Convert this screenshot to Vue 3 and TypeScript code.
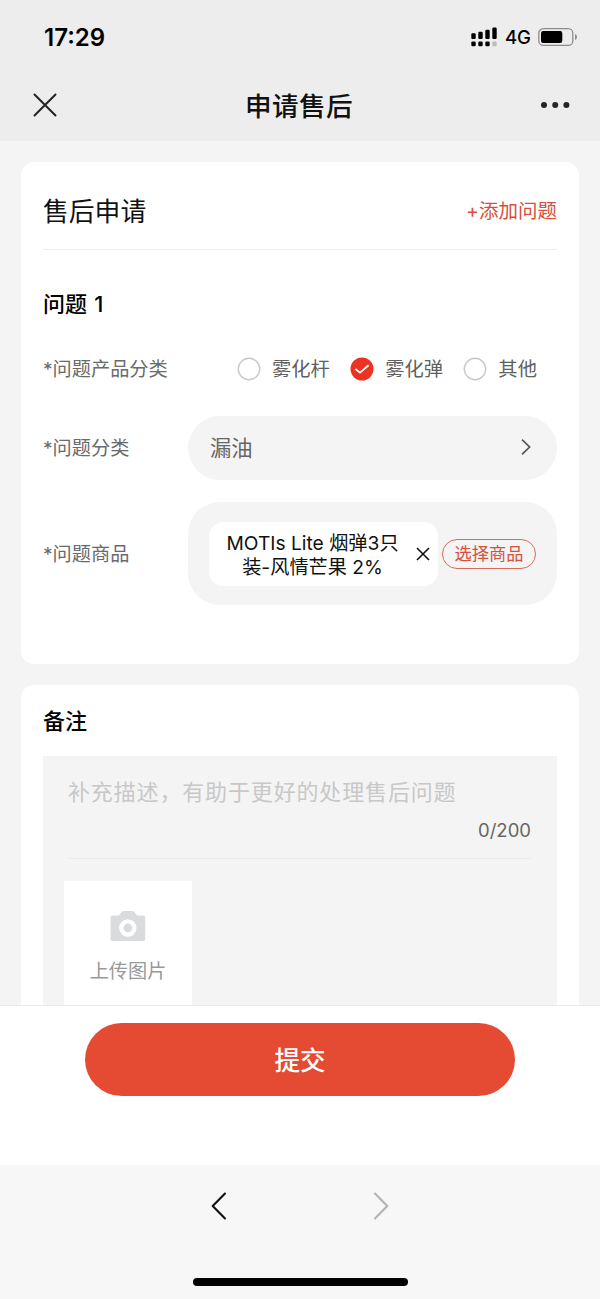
<script setup lang="ts">
import { ref } from 'vue'

const categories = ['雾化杆', '雾化弹', '其他']
const selected = ref('雾化弹')
const note = ref('')
const signalBars = [
  { x: 0, y: 6.3 },
  { x: 7, y: 4.8 },
  { x: 14, y: 2.8 },
  { x: 21, y: 0.6 },
]
</script>

<template>
  <div class="screen">
    <header class="top">
      <div class="status">
        <span class="time">17:29</span>
        <div class="status-right">
          <svg class="signal" width="26" height="20" viewBox="0 0 26 20">
            <rect v-for="b in signalBars" :key="b.x" :x="b.x + 0.3" :y="b.y" width="4.4" :height="12 - b.y" rx="1.2" />
            <rect v-for="b in signalBars" :key="'d' + b.x" :x="b.x + 0.3" y="14.6" width="4.4" height="4.6" rx="1.2" :opacity="b.x === 21 ? 0.2 : 1" />
          </svg>
          <span class="network">4G</span>
          <svg class="battery" width="40" height="20" viewBox="0 0 40 20">
            <rect x="0.8" y="1.6" width="34" height="16.8" rx="4.5" fill="none" stroke="#8d8d8d" stroke-width="1.3" />
            <rect x="3" y="4" width="21.3" height="12" rx="2.2" />
            <path d="M37 7q2 .7 2 3t-2 3z" fill="#8d8d8d" />
          </svg>
        </div>
      </div>
      <nav class="nav">
        <svg width="24" height="24" viewBox="0 0 24 24" fill="none" stroke="#222" stroke-width="2" stroke-linecap="round">
          <path d="M1.5 1.5l21 21M22.5 1.5l-21 21" />
        </svg>
        <h1>申请售后</h1>
        <svg width="30" height="8" viewBox="0 0 30 8" fill="#252525">
          <circle cx="4" cy="4" r="3" /><circle cx="15.2" cy="4" r="3" /><circle cx="26.4" cy="4" r="3" />
        </svg>
      </nav>
    </header>

    <main class="content">
      <section class="card request">
        <div class="card-head">
          <h2>售后申请</h2>
          <a class="add">+添加问题</a>
        </div>
        <h3 class="issue">问题 1</h3>
        <div class="row kinds">
          <span class="label">*问题产品分类</span>
          <div class="radios">
            <label v-for="c in categories" :key="c" class="radio" @click="selected = c">
              <svg width="24" height="24" viewBox="0 0 24 24" fill="none">
                <template v-if="selected === c">
                  <circle cx="12" cy="12" r="11.5" fill="#e93323" />
                  <path d="M5.4 12l4.6 3.6L18.6 8.2" stroke="#fff" stroke-width="1.8" />
                </template>
                <circle v-else cx="12" cy="12" r="10.7" fill="#fff" stroke="#c8c8c8" stroke-width="1.4" />
              </svg>
              <span>{{ c }}</span>
            </label>
          </div>
        </div>
        <div class="row select-row">
          <span class="label">*问题分类</span>
          <div class="select">
            <span>漏油</span>
            <svg width="10" height="18" viewBox="0 0 10 18" fill="none" stroke="#555" stroke-width="1.7">
              <path d="M1 1.7L8.6 9 1 16.3" />
            </svg>
          </div>
        </div>
        <div class="row">
          <span class="label">*问题商品</span>
          <div class="product">
            <div class="chip">
              <p>MOTIs Lite 烟弹3只<br />装-风情芒果 2%</p>
              <svg width="14" height="14" viewBox="0 0 14 14" fill="none" stroke="#111" stroke-width="1.6">
                <path d="M1 1l12 12M13 1L1 13" />
              </svg>
            </div>
            <button class="choose">选择商品</button>
          </div>
        </div>
      </section>

      <section class="card remark">
        <h3>备注</h3>
        <div class="note">
          <div class="entry">
            <span class="placeholder">补充描述，有助于更好的处理售后问题</span>
            <span class="count">{{ note.length }}/200</span>
          </div>
          <div class="upload">
            <svg width="36" height="32" viewBox="0 0 36 32">
              <path fill="#dadbdd" fill-rule="evenodd" d="M2.2 5.5H9L11.6 2Q12.3 1 13.5 1H22.5Q23.7 1 24.4 2L27 5.5H33.5Q35.2 5.5 35.2 7.2V29.3Q35.2 31 33.5 31H2.2Q.6 31 .6 29.3V7.2Q.6 5.5 2.2 5.5zM17.8 9.3a8.7 8.7 0 1 0 0 17.4a8.7 8.7 0 0 0 0-17.4z" />
              <circle cx="17.8" cy="18" r="4.4" fill="#dadbdd" />
            </svg>
            <span>上传图片</span>
          </div>
        </div>
      </section>
    </main>

    <div class="submit-bar">
      <button class="submit">提交</button>
    </div>

    <footer class="browser-bar">
      <div class="arrows">
        <svg width="16" height="28" viewBox="0 0 16 28" fill="none" stroke="#111" stroke-width="2.1" stroke-linecap="round" stroke-linejoin="round">
          <path d="M14 1.5L1.7 14 14 26.5" />
        </svg>
        <svg width="16" height="28" viewBox="0 0 16 28" fill="none" stroke="#b2b2b2" stroke-width="2.1" stroke-linecap="round" stroke-linejoin="round">
          <path d="M2 1.5L14.3 14 2 26.5" />
        </svg>
      </div>
      <div class="home-indicator"></div>
    </footer>
  </div>
</template>

<style>
body {
  margin: 0;
}
</style>

<style scoped>
* {
  box-sizing: border-box;
}
h1, h2, h3, p {
  margin: 0;
}
svg {
  display: block;
  flex: none;
}
button {
  font-family: inherit;
  padding: 0;
}
.screen {
  width: 600px;
  height: 1299px;
  display: flex;
  flex-direction: column;
  overflow: hidden;
  background: #f4f4f4;
  font-family: Inter, "Noto Sans CJK SC", sans-serif;
  color: #111;
  white-space: nowrap;
}
.top {
  height: 141px;
  flex: none;
  background: #ededed;
}
.status {
  height: 74px;
  padding: 0 22px 0 44px;
  display: flex;
  align-items: center;
  justify-content: space-between;
}
.time {
  padding-top: 1px;
  font-size: 24px;
  font-weight: 600;
  line-height: 30px;
  color: #000;
}
.status-right {
  display: flex;
  align-items: center;
}
.network {
  margin: 0 7px 0 8px;
  font-size: 18.6px;
  font-weight: 500;
  line-height: 24px;
  color: #000;
}
.nav {
  height: 63px;
  padding: 0 30px 1px 33px;
  display: flex;
  align-items: center;
  justify-content: space-between;
}
h1 {
  padding: 1px 0 0 1px;
  font-size: 26.6px;
  letter-spacing: 0.4px;
  font-weight: 500;
  line-height: 40px;
}
.content {
  flex: 1;
  min-height: 0;
  overflow: hidden;
  padding: 21px 21px 0;
}
.card {
  background: #fff;
  border-radius: 13px;
  padding: 0 22px;
}
.request {
  height: 502px;
  margin-bottom: 21px;
}
.card-head {
  height: 88px;
  padding-top: 9px;
  display: flex;
  align-items: center;
  justify-content: space-between;
  border-bottom: 1px solid #eee;
}
h2 {
  padding-top: 3px;
  font-size: 25.8px;
  font-weight: 400;
  line-height: 38px;
}
.add {
  padding-bottom: 1px;
  font-size: 19.5px;
  color: #d6503c;
}
h3 {
  font-size: 22px;
  font-weight: 500;
  color: #000;
}
.issue {
  margin-top: 38px;
  line-height: 32px;
  word-spacing: 1.5px;
}
.row {
  display: flex;
  align-items: center;
}
.label {
  width: 145px;
  flex: none;
  padding-bottom: 2px;
  font-size: 19.2px;
  color: #6a6a6a;
}
.kinds {
  height: 30px;
  margin-top: 34px;
}
.radios {
  display: flex;
  margin-left: 48.5px;
  gap: 20px;
}
.radio {
  display: flex;
  align-items: center;
  gap: 11.4px;
  font-size: 19.3px;
  line-height: 28px;
  color: #606060;
}
.select-row {
  margin: 32px 0 22px;
}
.select {
  flex: 1;
  height: 64px;
  padding: 0 26px 0 22px;
  border-radius: 32px;
  background: #f4f4f4;
  display: flex;
  align-items: center;
  justify-content: space-between;
  font-size: 21.3px;
  color: #666;
}
.select span {
  padding-bottom: 4px;
}
.select svg {
  margin-bottom: 2px;
}
.product {
  flex: 1;
  height: 103px;
  padding: 0 21px;
  border-radius: 32px;
  background: #f4f4f4;
  display: flex;
  align-items: center;
  justify-content: space-between;
}
.chip {
  width: 229px;
  height: 64px;
  margin-top: 1px;
  padding: 0 8px 0 17.5px;
  border-radius: 14px;
  background: #fff;
  display: flex;
  align-items: center;
  justify-content: space-between;
}
.chip p {
  padding-top: 2px;
  font-size: 19.2px;
  line-height: 24px;
  text-align: center;
}
.choose {
  width: 94px;
  height: 30px;
  border: 1px solid #dc6a58;
  border-radius: 15px;
  background: transparent;
  font-size: 17.2px;
  line-height: 26px;
  color: #d6503c;
}
.remark {
  height: 420px;
}
.remark h3 {
  height: 71px;
  padding-top: 1px;
  line-height: 71px;
}
.note {
  height: 349px;
  padding: 0 21px;
  background: #f4f4f4;
}
.entry {
  height: 103px;
  margin: 0 5px 22px 4px;
  padding-top: 19px;
  border-bottom: 1px solid #eaeaea;
  display: flex;
  flex-direction: column;
}
.placeholder {
  font-size: 22px;
  letter-spacing: 0.85px;
  line-height: 34px;
  color: #c8c8c8;
}
.count {
  align-self: flex-end;
  margin-top: 8px;
  font-size: 18.5px;
  line-height: 26px;
  color: #666;
}
.upload {
  width: 128px;
  height: 128px;
  padding-top: 29px;
  background: #fff;
  display: flex;
  flex-direction: column;
  align-items: center;
  font-size: 19.2px;
  color: #999;
}
.upload span {
  margin-top: 15px;
  line-height: 28px;
}
.submit-bar {
  height: 160px;
  flex: none;
  border-top: 1px solid #e9e9e9;
  background: #fff;
  padding-top: 17px;
}
.submit {
  display: block;
  width: 430px;
  height: 73px;
  margin: 0 auto;
  padding-bottom: 3px;
  border: 0;
  border-radius: 37px;
  background: #e54b33;
  color: #fff;
  font-size: 25.6px;
  font-weight: 500;
}
.browser-bar {
  height: 134px;
  flex: none;
  background: #f7f7f7;
  display: flex;
  flex-direction: column;
  align-items: center;
}
.arrows {
  height: 81px;
  display: flex;
  align-items: center;
  gap: 146px;
}
.home-indicator {
  width: 215px;
  height: 8px;
  margin-top: 32px;
  border-radius: 4px;
  background: #000;
}
</style>
